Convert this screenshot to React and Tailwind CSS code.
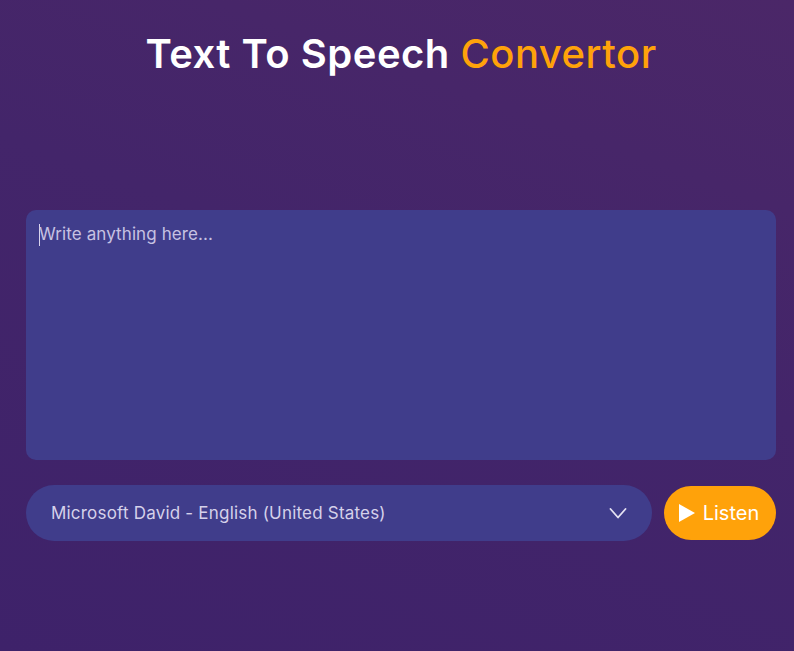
import React from "react";

export default function App() {
  return (
    <div
      className="w-full h-[651px] overflow-hidden bg-[linear-gradient(200deg,#4b2768_0%,#43256a_45%,#3e226a_100%)] text-white"
      style={{ fontFamily: "Inter, 'Noto Sans', sans-serif" }}
    >
      <div className="ml-[26px] w-[750px] flex flex-col">
        <h1 className="mt-[28px] h-[52px] flex items-center justify-center text-[40px] font-semibold tracking-[0.5px] leading-none">
          <span className="text-white">Text To Speech&nbsp;</span>
          <span className="text-[#ffa20a] font-medium">Convertor</span>
        </h1>
        <div className="mt-[130px] h-[250px] rounded-[10px] bg-[#403d8b] px-[13px] pt-[14px]">
          <div className="flex items-center h-[22px]">
            <span className="w-px h-[22px] bg-[#d8d4ee] mr-[-1px]" />
            <span className="text-[17px] tracking-[0.1px] text-[#c7c2e2]">Write anything here...</span>
          </div>
        </div>
        <div className="mt-[25px] flex items-center gap-[12px]">
          <div className="flex-1 h-[56px] rounded-full bg-[#403d8b] flex items-center pl-[25px] pr-[24px]">
            <span className="flex-1 text-[17px] tracking-[0.2px] pt-[1px] text-[#d5d1ea]">Microsoft David - English (United States)</span>
            <svg width="20" height="14" viewBox="0 0 20 14" fill="none" stroke="#e6e3f3" strokeWidth="1.8" strokeLinecap="round" strokeLinejoin="round">
              <path d="M2.5 3 L10 11.5 L17.5 3" />
            </svg>
          </div>
          <button className="w-[112px] h-[54px] rounded-full bg-[#ffa20a] flex items-center justify-center gap-[7px] text-white text-[20px]">
            <svg width="18" height="20" viewBox="0 0 18 20" fill="white" className="ml-[-3px]">
              <path d="M1 1 L17 10 L1 19 Z" />
            </svg>
            <span>Listen</span>
          </button>
        </div>
      </div>
    </div>
  );
}
